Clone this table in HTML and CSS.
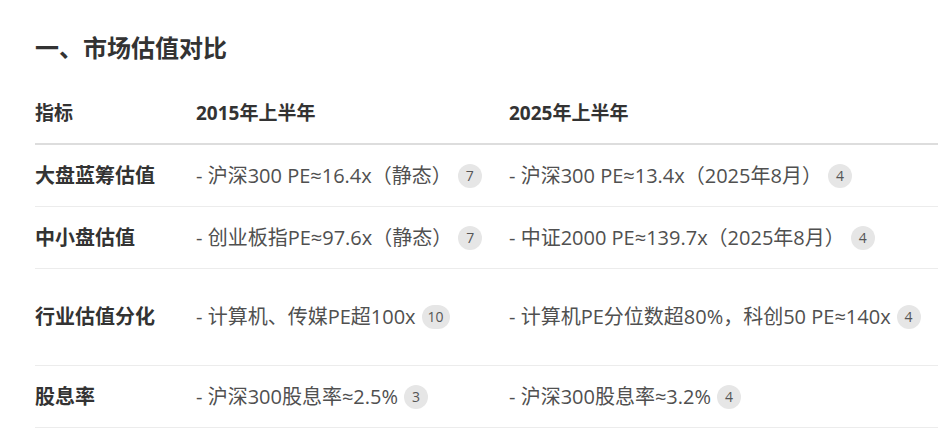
FILE: index.html
```html
<!DOCTYPE html>
<html lang="zh-CN">
<head>
<meta charset="utf-8">
<title>市场估值对比</title>
<link rel="stylesheet" href="styles.css">
</head>
<body>
<section class="page">
  <h2 class="title">一、市场估值对比</h2>
  <div class="table">
    <div class="row head">
      <div class="cell label">指标</div>
      <div class="cell">2015年上半年</div>
      <div class="cell">2025年上半年</div>
    </div>
    <div class="row">
      <div class="cell label">大盘蓝筹估值</div>
      <div class="cell">- 沪深300 PE≈16.4x（静态）<span class="badge">7</span></div>
      <div class="cell">- 沪深300 PE≈13.4x（2025年8月）<span class="badge">4</span></div>
    </div>
    <div class="row">
      <div class="cell label">中小盘估值</div>
      <div class="cell">- 创业板指PE≈97.6x（静态）<span class="badge">7</span></div>
      <div class="cell">- 中证2000 PE≈139.7x（2025年8月）<span class="badge">4</span></div>
    </div>
    <div class="row tall">
      <div class="cell label">行业估值分化</div>
      <div class="cell">- 计算机、传媒PE超100x<span class="badge">10</span></div>
      <div class="cell">- 计算机PE分位数超80%，科创50 PE≈140x<span class="badge">4</span></div>
    </div>
    <div class="row">
      <div class="cell label">股息率</div>
      <div class="cell">- 沪深300股息率≈2.5%<span class="badge">3</span></div>
      <div class="cell">- 沪深300股息率≈3.2%<span class="badge">4</span></div>
    </div>
  </div>
</section>
</body>
</html>
```

FILE: styles.css
```css
html, body {
  margin: 0;
  padding: 0;
  background: #ffffff;
}

body {
  font-family: "Open Sans", "Noto Sans CJK SC", sans-serif;
  color: #333333;
}

.page {
  padding: 29px 0 0 35px;
}

.title {
  margin: 0;
  font-family: "Noto Sans CJK SC", sans-serif;
  font-size: 24px;
  line-height: 36px;
  font-weight: 700;
  color: #333333;
}

.table {
  margin-top: 18px;
}

.row {
  display: grid;
  grid-template-columns: 161px 313px 1fr;
  align-items: center;
  height: 62px;
  box-sizing: border-box;
  border-bottom: 1px solid #ececec;
}

.row.head {
  border-bottom: 2px solid #dddddd;
}

.row.tall {
  height: 97px;
}

.cell {
  font-size: 20px;
  line-height: 30px;
  color: #505050;
  white-space: nowrap;
  display: flex;
  align-items: center;
}

.head .cell {
  font-size: 19px;
}

.head .cell,
.cell.label {
  font-weight: 700;
  color: #333333;
}

.badge {
  display: inline-flex;
  align-items: center;
  justify-content: center;
  min-width: 24px;
  height: 24px;
  padding: 0 6px;
  box-sizing: border-box;
  margin-left: 6px;
  border-radius: 12px;
  background: #e6e6e6;
  color: #555555;
  font-size: 14px;
  font-weight: 400;
  line-height: 1;
}
```
